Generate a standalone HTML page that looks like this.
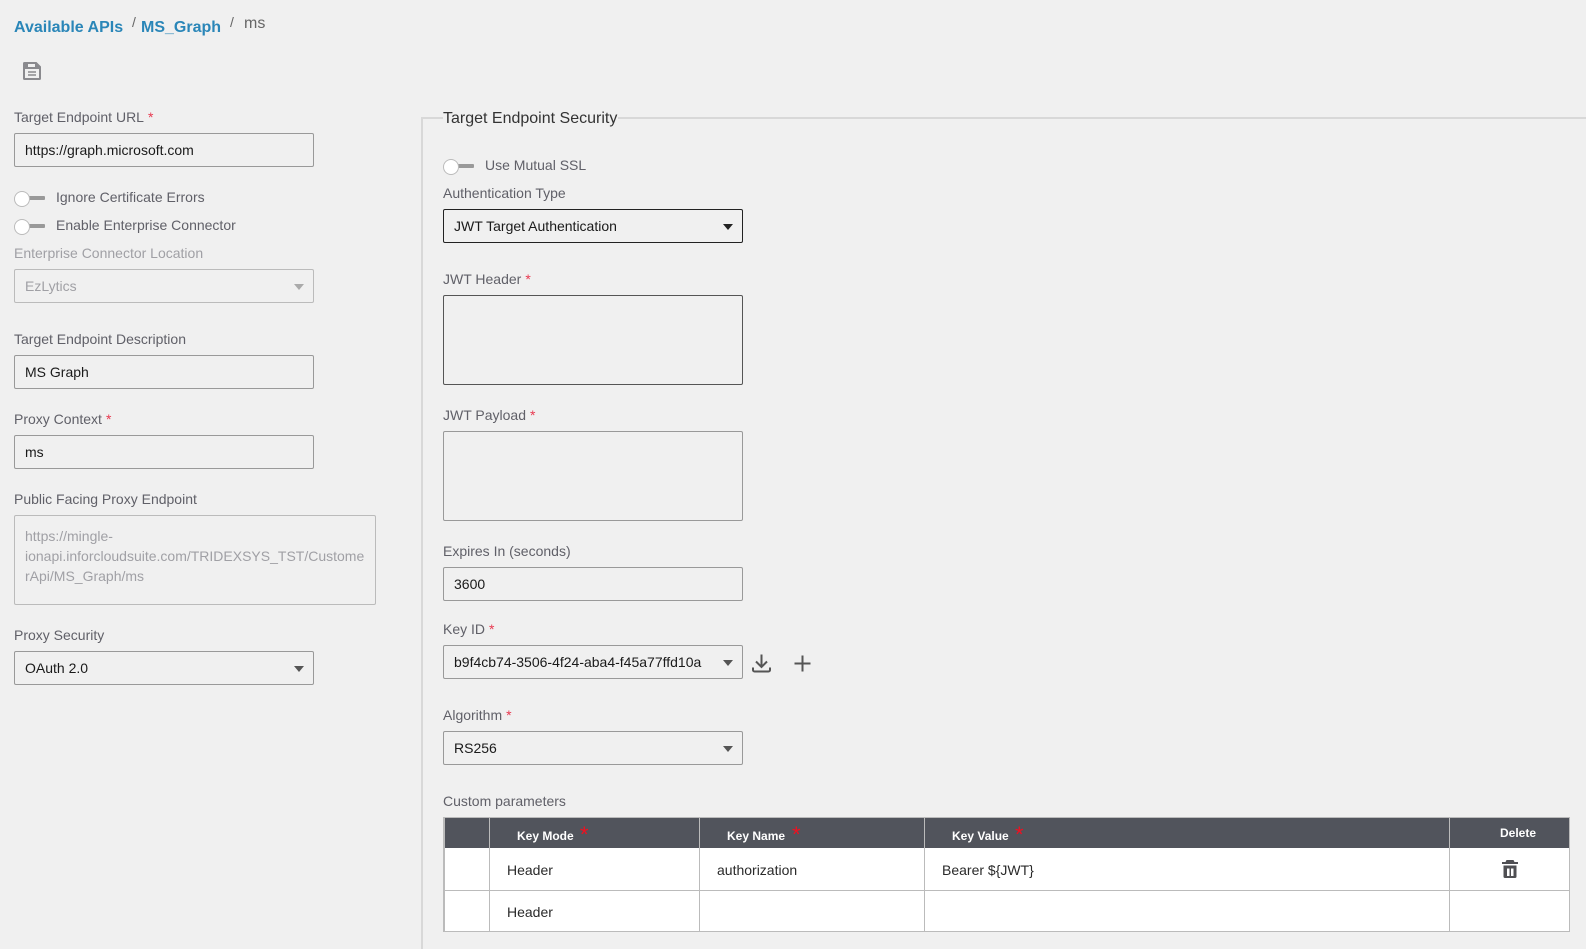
<!DOCTYPE html>
<html><head><meta charset="utf-8"><title>ms</title>
<style>
html,body{margin:0;padding:0;width:1586px;height:949px;overflow:hidden;background:#f0f0f0}
body{position:relative;font-family:"Liberation Sans",Arial,sans-serif;font-size:14px;color:#5f5f66}
.a{position:absolute;white-space:nowrap}
.l{position:absolute;white-space:nowrap;line-height:18px;height:18px;color:#606068}
.l i{font-style:normal;color:#e8384f;margin-left:4px}
.d{color:#a0a0a5}
.f{position:absolute;box-sizing:border-box;width:300px;height:34px;border:1px solid #999;border-radius:2px;line-height:32px;padding-left:10px;color:#1a1a1a;white-space:nowrap}
.ta{height:90px}
.f.dis{border-color:#bbb;color:#a0a0a5}
.f.dark{border-color:#222}
.f.mid{border-color:#555}
.ar{position:absolute;right:9px;top:14px;width:0;height:0;border-left:5.5px solid transparent;border-right:5.5px solid transparent;border-top:6px solid #555}
.tg{position:absolute;width:31px;height:16px}
.tg b{position:absolute;left:14px;top:5px;width:17px;height:4px;background:#999;border-radius:1px}
.tg u{position:absolute;left:0;top:0;width:16px;height:16px;box-sizing:border-box;border:1px solid #bbb;border-radius:50%;background:#fff}
.t{position:absolute;left:443px;top:817px;width:1127px;height:115px;box-sizing:border-box;border:1px solid #bbb;border-left-width:2px;background:#fff}
.h{position:absolute;background:#51545c;left:445px;top:818px;width:1124px;height:30px}
.v{position:absolute;width:1px;background:#bbb;top:818px;height:113px}
.hr{position:absolute;left:445px;width:1124px;height:1px;background:#bbb}
.th{position:absolute;color:#fff;font-weight:bold;font-size:12px;line-height:14px;white-space:nowrap}
.st{position:absolute;color:#f01020;font-size:22px;line-height:22px;font-weight:normal}
.td{position:absolute;color:#2a2a2a;line-height:18px;white-space:nowrap}
</style></head><body>

<div class="a" style="left:14px;top:19px;font-size:16px;font-weight:bold;color:#2a86b8;line-height:18px">Available APIs</div>
<div class="a" style="left:132px;top:13px;font-size:14px;color:#666;line-height:18px">/</div>
<div class="a" style="left:141px;top:19px;font-size:16px;font-weight:bold;color:#2a86b8;line-height:18px">MS_Graph</div>
<div class="a" style="left:230px;top:13px;font-size:14px;color:#666;line-height:18px">/</div>
<div class="a" style="left:244px;top:15px;font-size:16px;color:#666;line-height:18px">ms</div>

<svg class="a" style="left:23px;top:62px" width="18" height="18" viewBox="0 0 18 18">
<path fill="#8a8a8e" fill-rule="evenodd" d="M1.500 0H13.500L18 4.500V16.500A1.500 1.500 0 0 1 16.500 18H1.500A1.500 1.500 0 0 1 0 16.500V1.500A1.500 1.500 0 0 1 1.500 0zM5 2V5H12V2zM2 7V16H16V7zM5 9.200H13V10.700H5zM5 12.200H13V13.700H5z"/>
</svg>

<div class="l" style="left:14px;top:108px">Target Endpoint URL<i>*</i></div>
<div class="f" style="left:14px;top:133px">https://graph.microsoft.com</div>

<div class="tg" style="left:14px;top:191px"><b></b><u></u></div>
<div class="l" style="left:56px;top:188px">Ignore Certificate Errors</div>
<div class="tg" style="left:14px;top:219px"><b></b><u></u></div>
<div class="l" style="left:56px;top:216px">Enable Enterprise Connector</div>

<div class="l d" style="left:14px;top:244px">Enterprise Connector Location</div>
<div class="f dis" style="left:14px;top:269px">EzLytics<span class="ar" style="border-top-color:#aaa"></span></div>

<div class="l" style="left:14px;top:330px">Target Endpoint Description</div>
<div class="f" style="left:14px;top:355px">MS Graph</div>

<div class="l" style="left:14px;top:410px">Proxy Context<i>*</i></div>
<div class="f" style="left:14px;top:435px">ms</div>

<div class="l" style="left:14px;top:490px">Public Facing Proxy Endpoint</div>
<div class="f dis ta" style="left:14px;top:515px;width:362px;line-height:20px;padding-top:10px">https://mingle-<br>ionapi.inforcloudsuite.com/TRIDEXSYS_TST/Custome<br>rApi/MS_Graph/ms</div>

<div class="l" style="left:14px;top:626px">Proxy Security</div>
<div class="f" style="left:14px;top:651px">OAuth 2.0<span class="ar"></span></div>

<!-- fieldset -->
<div class="a" style="left:421px;top:117px;width:2px;height:832px;background:#d8d8d8"></div>
<div class="a" style="left:421px;top:117px;width:1165px;height:2px;background:#d8d8d8"></div>
<div class="a" style="left:443px;top:109px;font-size:16px;line-height:20px;color:#333;background:#f0f0f0;padding-right:1px">Target Endpoint Security</div>

<div class="tg" style="left:443px;top:159px"><b></b><u></u></div>
<div class="l" style="left:485px;top:156px">Use Mutual SSL</div>

<div class="l" style="left:443px;top:184px">Authentication Type</div>
<div class="f dark" style="left:443px;top:209px">JWT Target Authentication<span class="ar" style="border-top-color:#222"></span></div>

<div class="l" style="left:443px;top:270px">JWT Header<i>*</i></div>
<div class="f ta mid" style="left:443px;top:295px"></div>

<div class="l" style="left:443px;top:406px">JWT Payload<i>*</i></div>
<div class="f ta" style="left:443px;top:431px"></div>

<div class="l" style="left:443px;top:542px">Expires In (seconds)</div>
<div class="f" style="left:443px;top:567px">3600</div>

<div class="l" style="left:443px;top:620px">Key ID<i>*</i></div>
<div class="f" style="left:443px;top:645px">b9f4cb74-3506-4f24-aba4-f45a77ffd10a<span class="ar"></span></div>

<svg class="a" style="left:752px;top:654px" width="19" height="19" viewBox="0 0 19 19">
<path fill="none" stroke="#555" stroke-width="2" d="M9.500 0.500V12.500M4 7.500L9.500 13L15 7.500M1 13.500V16a1.500 1.500 0 0 0 1.500 1.500h14A1.500 1.500 0 0 0 18 16v-2.500"/>
</svg>
<svg class="a" style="left:794px;top:655px" width="17" height="17" viewBox="0 0 17 17">
<path fill="none" stroke="#555" stroke-width="2" d="M8.500 0.500V16.500M0.500 8.500H16.500"/>
</svg>

<div class="l" style="left:443px;top:706px">Algorithm<i>*</i></div>
<div class="f" style="left:443px;top:731px">RS256<span class="ar"></span></div>

<div class="l" style="left:443px;top:792px">Custom parameters</div>

<div class="t"></div>
<div class="h"></div>
<div class="v" style="left:489px"></div>
<div class="v" style="left:699px"></div>
<div class="v" style="left:924px"></div>
<div class="v" style="left:1449px"></div>
<div class="hr" style="top:890px"></div>

<div class="th" style="left:517px;top:829px">Key Mode</div><div class="st" style="left:580px;top:824px">*</div>
<div class="th" style="left:727px;top:829px">Key Name</div><div class="st" style="left:792px;top:824px">*</div>
<div class="th" style="left:952px;top:829px">Key Value</div><div class="st" style="left:1015px;top:824px">*</div>
<div class="th" style="left:1500px;top:826px">Delete</div>

<div class="td" style="left:507px;top:861px">Header</div>
<div class="td" style="left:717px;top:861px">authorization</div>
<div class="td" style="left:942px;top:861px">Bearer ${JWT}</div>
<div class="td" style="left:507px;top:903px">Header</div>

<svg class="a" style="left:1502px;top:860px" width="16" height="18" viewBox="0 0 16 18">
<path fill="#4f4f53" fill-rule="evenodd" d="M4.500 0H11.500L12.500 2H16V4H0V2H3.500zM1.500 5.500H14.500V16.500A1.500 1.500 0 0 1 13 18H3A1.500 1.500 0 0 1 1.500 16.500zM5 8.500V16H7.500V8.500zM9 8.500V16H11.500V8.500z"/>
</svg>

</body></html>
